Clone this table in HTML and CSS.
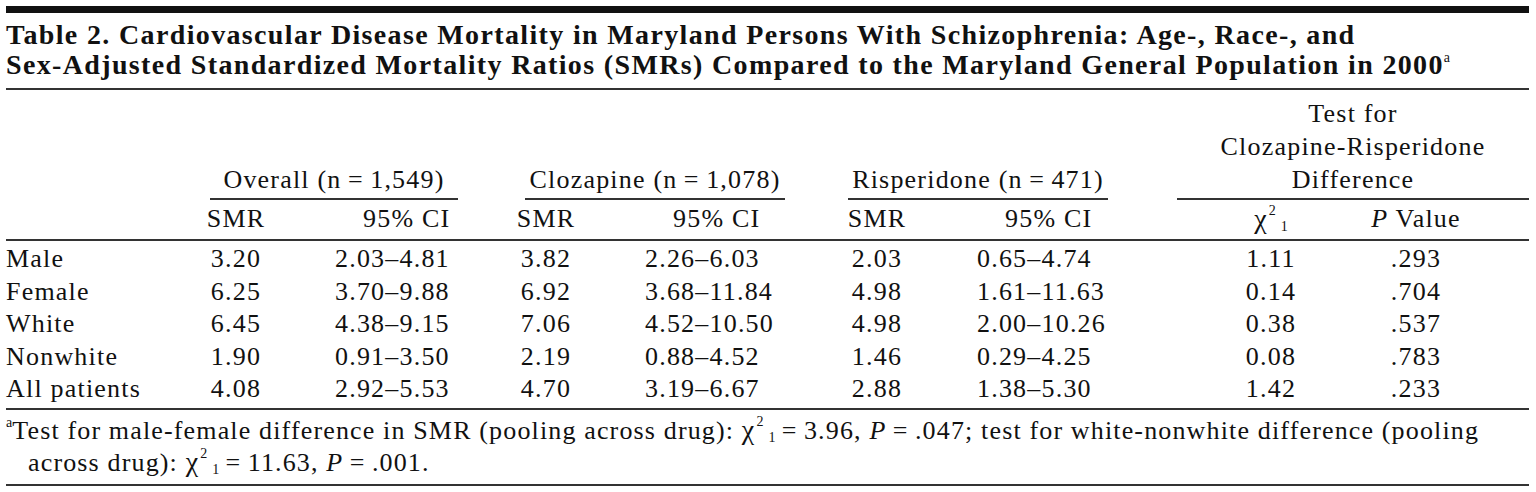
FILE: index.html
```html
<!DOCTYPE html>
<html lang="en">
<head>
<meta charset="utf-8">
<title>Table 2</title>
<link rel="stylesheet" href="styles.css">
</head>
<body>
<div class="page">
  <div class="bar"></div>
  <h1 class="title">Table 2. Cardiovascular Disease Mortality in Maryland Persons With Schizophrenia: Age-, Race-, and<br>Sex-Adjusted Standardized Mortality Ratios (SMRs) Compared to the Maryland General Population in 2000<sup class="mark">a</sup></h1>
  <div class="table">
    <div class="blank"></div>
    <div class="grp grp-a">Overall (n&#8201;=&#8201;1,549)</div>
    <div class="grp grp-b">Clozapine (n&#8201;=&#8201;1,078)</div>
    <div class="grp grp-c">Risperidone (n&#8201;=&#8201;471)</div>
    <div class="test">Test for<br>Clozapine-Risperidone<br>Difference</div>

    <div class="sub"></div>
    <div class="sub num">SMR</div>
    <div class="sub cih">95% CI</div>
    <div class="sub num">SMR</div>
    <div class="sub cih">95% CI</div>
    <div class="sub num">SMR</div>
    <div class="sub cih">95% CI</div>
    <div class="sub num"><span class="chi">χ</span><sup class="s2">2</sup><sub class="s1">1</sub></div>
    <div class="sub num"><i>P</i> Value</div>
    <div class="sub"></div>

    <div class="rule rule-mid"></div>

    <div class="c lbl">Male</div><div class="c num">3.20</div><div class="c ci">2.03–4.81</div><div class="c num">3.82</div><div class="c ci">2.26–6.03</div><div class="c num">2.03</div><div class="c ci">0.65–4.74</div><div class="c num">1.11</div><div class="c num">.293</div><div class="c"></div>
    <div class="c lbl">Female</div><div class="c num">6.25</div><div class="c ci">3.70–9.88</div><div class="c num">6.92</div><div class="c ci">3.68–11.84</div><div class="c num">4.98</div><div class="c ci">1.61–11.63</div><div class="c num">0.14</div><div class="c num">.704</div><div class="c"></div>
    <div class="c lbl">White</div><div class="c num">6.45</div><div class="c ci">4.38–9.15</div><div class="c num">7.06</div><div class="c ci">4.52–10.50</div><div class="c num">4.98</div><div class="c ci">2.00–10.26</div><div class="c num">0.38</div><div class="c num">.537</div><div class="c"></div>
    <div class="c lbl">Nonwhite</div><div class="c num">1.90</div><div class="c ci">0.91–3.50</div><div class="c num">2.19</div><div class="c ci">0.88–4.52</div><div class="c num">1.46</div><div class="c ci">0.29–4.25</div><div class="c num">0.08</div><div class="c num">.783</div><div class="c"></div>
    <div class="c lbl">All patients</div><div class="c num">4.08</div><div class="c ci">2.92–5.53</div><div class="c num">4.70</div><div class="c ci">3.19–6.67</div><div class="c num">2.88</div><div class="c ci">1.38–5.30</div><div class="c num">1.42</div><div class="c num">.233</div><div class="c"></div>

    <div class="rule rule-end"></div>
  </div>
  <p class="note"><sup class="mark">a</sup>Test for male-female difference in SMR (pooling across drug): <span class="chi">χ</span><sup class="s2">2</sup><sub class="s1">1</sub>&#8201;=&#8201;3.96, <i>P</i>&#8201;=&#8201;.047; test for white-nonwhite difference (pooling<br>across drug): <span class="chi">χ</span><sup class="s2">2</sup><sub class="s1">1</sub>&#8201;=&#8201;11.63, <i>P</i>&#8201;=&#8201;.001.</p>
</div>
</body>
</html>
```

FILE: styles.css
```css
* {
  box-sizing: border-box;
  margin: 0;
  padding: 0;
}

body {
  margin: 0;
  background: #ffffff;
  color: #111111;
  font-family: "Liberation Serif", "Times New Roman", serif;
}

.page {
  padding: 6px 7px 0 6px;
}

.bar {
  height: 7px;
  background: #111111;
}

.title {
  margin-top: 7px;
  font-size: 28px;
  line-height: 30px;
  font-weight: 700;
  letter-spacing: 1.35px;
  white-space: nowrap;
  padding-bottom: 8px;
  border-bottom: 2px solid #333333;
}

.mark {
  font-size: 14px;
  line-height: 0;
  position: relative;
  top: -2px;
  vertical-align: super;
  letter-spacing: 0;
  font-weight: 400;
}

.table {
  display: grid;
  grid-template-columns: 195px 70px 240px 70px 260px 72px 264px 188px 102px 62px;
  font-size: 26px;
  letter-spacing: 1.2px;
  white-space: nowrap;
}

.test {
  grid-column: 8 / 11;
  text-align: center;
  line-height: 33px;
  padding-top: 7px;
  padding-bottom: 2px;
  border-bottom: 2px solid #333333;
}

.grp {
  align-self: end;
  text-align: center;
  line-height: 33px;
  padding-bottom: 2px;
  border-bottom: 2px solid #333333;
}

.grp-a {
  grid-column: 2 / 4;
  margin-left: 9px;
  margin-right: 53px;
}

.grp-b {
  grid-column: 4 / 6;
  margin-left: 14px;
  margin-right: 56px;
}

.grp-c {
  grid-column: 6 / 8;
  margin-left: 7px;
  margin-right: 69px;
}

.sub {
  line-height: 33px;
  padding-top: 2px;
}

.cih {
  padding-left: 92px;
}

.rule {
  grid-column: 1 / -1;
  height: 2px;
  background: #333333;
}

.rule-mid {
  margin-top: 3px;
  margin-bottom: 2px;
}

.rule-end {
  margin-top: 2px;
}

.c {
  line-height: 32.5px;
}

.num {
  text-align: center;
}

.ci {
  padding-left: 64px;
}

.chi {
  font-size: 28px;
}

.s2,
.s1 {
  font-size: 14px;
  line-height: 0;
  position: relative;
  vertical-align: baseline;
  letter-spacing: 0;
}

.s2 {
  top: -13px;
  margin-left: 1px;
}

.s1 {
  top: 3px;
  margin-left: 5px;
}

.note {
  font-size: 26px;
  line-height: 31px;
  letter-spacing: 1.15px;
  white-space: nowrap;
  margin-top: 4px;
  padding-left: 22px;
  text-indent: -22px;
  padding-bottom: 6px;
  border-bottom: 2px solid #333333;
}
```
